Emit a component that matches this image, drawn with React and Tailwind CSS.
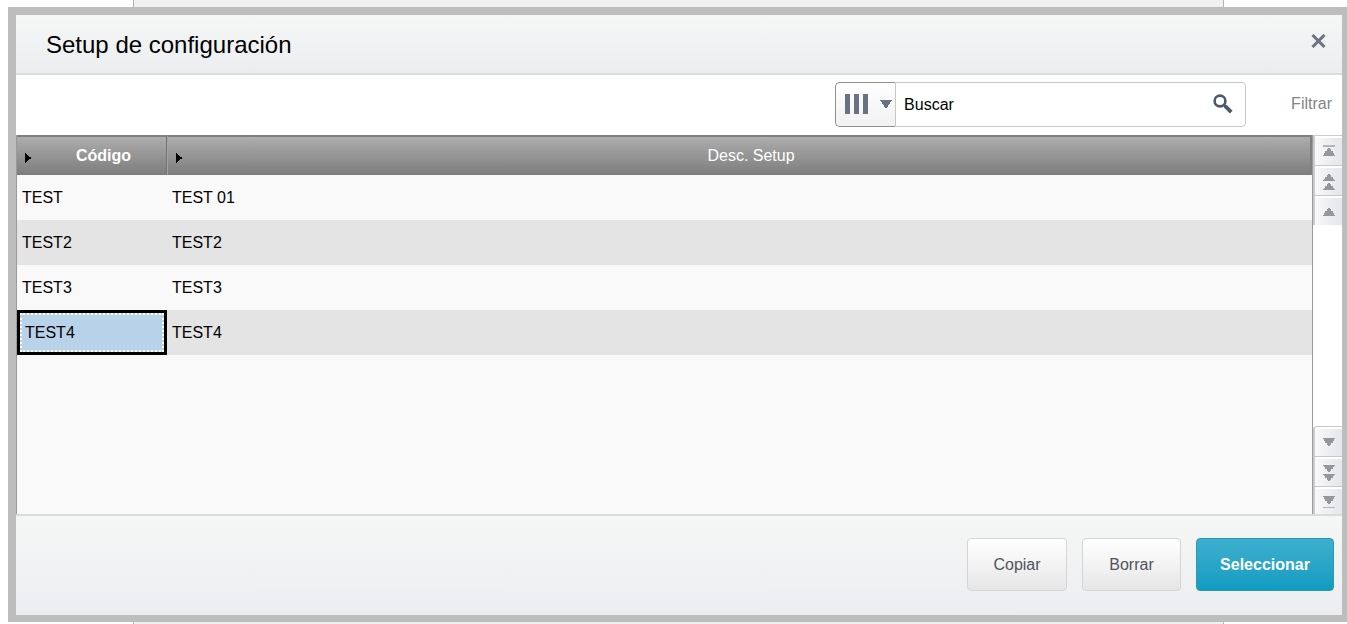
import React from "react";

const rows = [
  { code: "TEST", desc: "TEST 01" },
  { code: "TEST2", desc: "TEST2" },
  { code: "TEST3", desc: "TEST3" },
  { code: "TEST4", desc: "TEST4" },
];

function SortMark() {
  return (
    <svg width="6" height="10" viewBox="0 0 6 10" className="absolute top-4 left-2 fill-black" aria-hidden="true" shapeRendering="crispEdges">
      <path d="M0 0h1v1h1v1h1v1h1v1h2v2H4v1H3v1H2v1H1v1H0z" />
    </svg>
  );
}

const scrollIcons = {
  first: (
    <>
      <path d="M1 1h12v2H1z" fill="#b5b5b5" />
      <path d="M6 4h2v1h1v2h2v2h1v2h1v1H1v-1h1V9h1V7h2V5h1z" />
    </>
  ),
  pageUp: (
    <>
      <path d="M6 0h2v1h1v2h2v2h1v1h1v1H1V6h1V5h1V3h2V1h1z" />
      <path d="M6 9h2v1h1v2h2v2h1v1h1v1H1v-1h1v-1h1v-2h2v-2h1z" />
    </>
  ),
  up: <path d="M6 4h2v1h1v2h2v2h1v2h1v1H1v-1h1V9h1V7h2V5h1z" />,
  down: <path d="M1 3h12v1h-1v2h-1v2H9v2H8v1H6v-1H5V8H3V6H2V4H1z" />,
  pageDown: (
    <>
      <path d="M1 0h12v1h-1v1h-1v2H9v2H8v1H6V6H5V4H3V2H2V1H1z" />
      <path d="M1 9h12v1h-1v1h-1v2H9v2H8v1H6v-1H5v-2H3v-2H2v-1H1z" />
    </>
  ),
  last: (
    <>
      <path d="M1 2h12v1h-1v2h-1v2H9v2H8v1H6V9H5V7H3V5H2V3H1z" />
      <path d="M1 13h12v1H1z" fill="#b5b5b5" />
    </>
  ),
};

function ScrollButton({ icon, label, size = "h-[30px] border-b border-b-[#c8c8c8]" }) {
  return (
    <button
      type="button"
      aria-label={label}
      className={
        "flex w-full items-center justify-center border-t-2 border-t-white bg-linear-to-r from-[#f8f8fa] to-[#e4e6ea] " + size
      }
    >
      <svg width="14" height="16" viewBox="0 0 14 16" fill="#979797" aria-hidden="true">
        {scrollIcons[icon]}
      </svg>
    </button>
  );
}

function SearchBar() {
  return (
    <div className="flex h-[60px] items-center justify-end bg-white pr-[10px] pb-0.5">
      <div className="flex h-[45px] w-[411px] rounded-[5px]">
        <button
          type="button"
          aria-label="Columnas"
          className="flex w-[60px] items-center gap-3 rounded-l-[5px] border border-r-0 border-[#8f8f8f] bg-linear-to-b from-white to-[#f1f1f1] pl-[9px]"
        >
          <svg width="24" height="20" viewBox="0 0 24 20" fill="#697183" aria-hidden="true">
            <path d="M0 0h5v20H0zM9 0h5v20H9zM18 0h5v20h-5z" />
          </svg>
          <svg width="12" height="8" viewBox="0 0 12 8" className="-ml-px" fill="#697183" aria-hidden="true">
            <path d="M0 0h12v1h-1v1h-1v2H9v1H8v2H7v1H5V7H4V5H3V4H2V2H1V1H0z" />
          </svg>
        </button>
        <div className="flex min-w-0 flex-1 items-center rounded-r-[4px] border border-[#c3c8c8] bg-white">
          <input
            type="text"
            aria-label="Buscar"
            defaultValue="Buscar"
            className="h-full min-w-0 flex-1 bg-transparent pt-px pl-2 text-base text-black outline-none"
          />
          <button type="button" aria-label="Ejecutar búsqueda" className="flex h-full w-11 items-center justify-center">
            <svg width="20" height="20" viewBox="0 0 20 20" fill="none" stroke="#4e5a6b" aria-hidden="true">
              <circle cx="7" cy="7" r="5.4" strokeWidth="2.6" />
              <path d="M11 11l2 2" strokeWidth="2.6" />
              <path d="M12.2 12.2l6 6" strokeWidth="3.8" />
            </svg>
          </button>
        </div>
      </div>
      <a href="#filtrar" className="ml-[45px] text-base text-[#858585]">
        Filtrar
      </a>
    </div>
  );
}

export default function App() {
  return (
    <div className="relative flex min-h-screen flex-col bg-white pt-[7px] pb-[2px] pl-2 font-['Liberation_Sans',Arial,sans-serif] text-black">
      <div className="absolute inset-y-0 right-[123px] left-[133px] border-x border-[#b4b4b4] bg-[#f0f0f0]" />
      <section
        role="dialog"
        aria-labelledby="dialog-title"
        className="relative flex flex-1 flex-col border-t-8 border-r-[5px] border-b-[7px] border-l-8 border-[#bdbdbd] bg-white"
      >
        <header className="flex h-[60px] items-center justify-between border-b-2 border-[#dadcdd] bg-linear-to-b from-[#f5f7f6] to-[#ecedf0] pr-4 pl-[30px]">
          <h1 id="dialog-title" className="pt-px text-2xl">
            Setup de configuración
          </h1>
          <button type="button" aria-label="Cerrar" className="mb-1.5">
            <svg width="15" height="14" viewBox="0 0 15 14" fill="none" stroke="#6a7480" strokeWidth="3" aria-hidden="true">
              <path d="M1.5 1l12 12M13.5 1l-12 12" />
            </svg>
          </button>
        </header>

        <SearchBar />

        <div className="flex flex-1">
          <div className="min-w-0 flex-1 border-r border-l border-[#9a9a9a] bg-[#f9f9f9]">
            <table className="w-full table-fixed border-separate border-spacing-0 text-base">
              <thead>
                <tr className="h-10 text-white">
                  <th scope="col" className="relative w-[150px] border-t-2 border-r border-t-[#808080] border-r-[#747474] bg-linear-to-b from-[#adadad] to-[#7d7d7d] p-0 pl-6 font-bold">
                    <SortMark />
                    Código
                  </th>
                  <th scope="col" className="relative border-t-2 border-r-2 border-l border-t-[#808080] border-r-[#808080] border-l-[#a3a3a3] bg-linear-to-b from-[#adadad] to-[#7d7d7d] p-0 pl-6 font-normal">
                    <SortMark />
                    Desc. Setup
                  </th>
                </tr>
              </thead>
              <tbody>
                {rows.map((row) => (
                  <tr key={row.code} className="h-[45px] even:bg-[#e4e4e4]">
                    <td className="p-0">
                      {row.code === "TEST4" ? (
                        <div className="h-[45px] border-[3px] border-black bg-[#b8d2ea]">
                          <div className="flex h-full items-center border-2 border-dotted border-white pl-[3px]">{row.code}</div>
                        </div>
                      ) : (
                        <div className="pl-[5px]">{row.code}</div>
                      )}
                    </td>
                    <td className="p-0 pl-[5px]">{row.desc}</td>
                  </tr>
                ))}
              </tbody>
            </table>
          </div>
          <div className="flex w-[29px] flex-col justify-between">
            <div className="border-t border-l-2 border-[#cbcbcb]">
              <ScrollButton icon="first" label="Primera fila" />
              <ScrollButton icon="pageUp" label="Página anterior" />
              <ScrollButton icon="up" label="Fila anterior" size="h-[29px]" />
            </div>
            <div className="overflow-hidden rounded-tl-[4px] border-t border-l-2 border-[#cbcbcb]">
              <ScrollButton icon="down" label="Fila siguiente" />
              <ScrollButton icon="pageDown" label="Página siguiente" />
              <ScrollButton icon="last" label="Última fila" size="h-[27px]" />
            </div>
          </div>
        </div>

        <footer className="flex h-[101px] items-center justify-end gap-[15px] border-t-2 border-[#dadcdc] bg-linear-to-b from-[#f5f7f6] to-[#ecedf0] pr-2 pb-0.5">
          <button type="button" className="h-[53px] w-[100px] rounded-[4px] border border-[#d5d5d5] bg-linear-to-b from-white to-[#e6e6e6] text-base text-[#50545c]">
            Copiar
          </button>
          <button type="button" className="h-[53px] w-[99px] rounded-[4px] border border-[#d5d5d5] bg-linear-to-b from-white to-[#e6e6e6] text-base text-[#50545c]">
            Borrar
          </button>
          <button type="button" className="h-[53px] w-[138px] rounded-[4px] border border-[#2c98b4] bg-linear-to-b from-[#3cafce] to-[#0f9cc1] text-base font-bold text-white">
            Seleccionar
          </button>
        </footer>
      </section>
    </div>
  );
}
